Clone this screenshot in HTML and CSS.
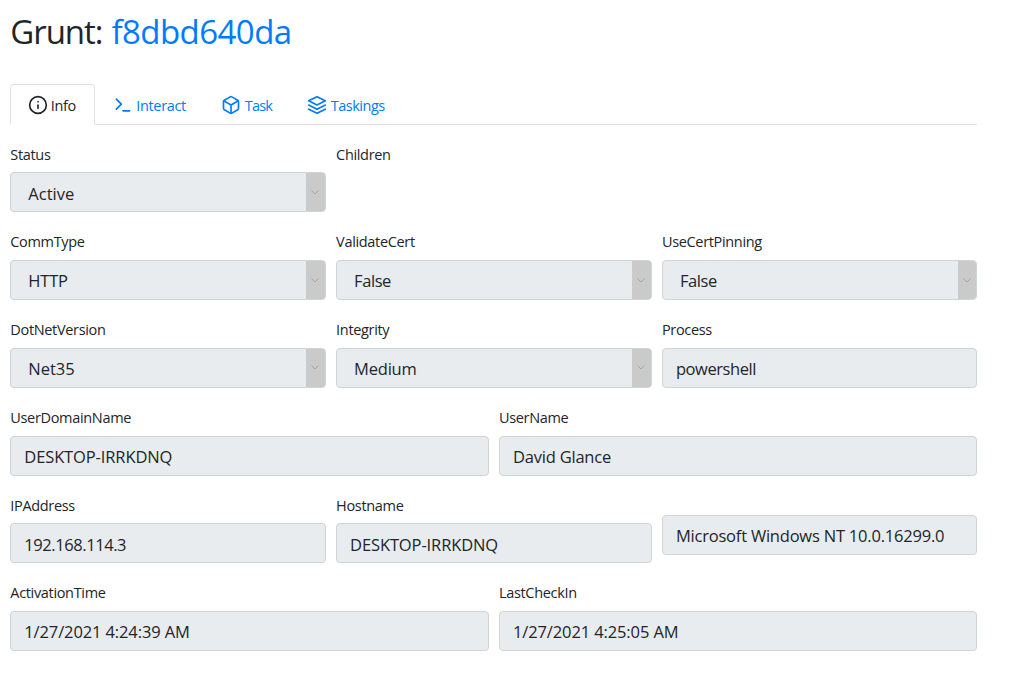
FILE: index.html
```
<!DOCTYPE html>
<html lang="en">
<head>
<meta charset="utf-8">
<title>Grunt: f8dbd640da</title>
<link rel="stylesheet" href="styles.css">
</head>
<body>
<main class="page">
  <h1 class="title"><span class="title-label">Grunt:</span><a class="title-link">f8dbd640da</a></h1>
  <nav class="tabs">
    <a class="tab active"><svg class="icon" viewBox="0 0 24 24"><circle cx="12" cy="12" r="10"/><path d="M12 16v-4M12 8h.01"/></svg><span>Info</span></a>
    <a class="tab tab-interact"><svg class="icon" viewBox="0 0 24 24"><path d="M4 17l6-6-6-6M12 19h8"/></svg><span>Interact</span></a>
    <a class="tab tab-task"><svg class="icon" viewBox="0 0 24 24"><path d="M21 16V8a2 2 0 0 0-1-1.73l-7-4a2 2 0 0 0-2 0l-7 4A2 2 0 0 0 3 8v8a2 2 0 0 0 1 1.73l7 4a2 2 0 0 0 2 0l7-4A2 2 0 0 0 21 16z"/><path d="M3.27 6.96L12 12.01l8.73-5.05M12 22.08V12"/></svg><span>Task</span></a>
    <a class="tab tab-taskings"><svg class="icon" viewBox="0 0 24 24"><path d="M12 2L2 7l10 5 10-5-10-5zM2 17l10 5 10-5M2 12l10 5 10-5"/></svg><span>Taskings</span></a>
  </nav>
  <form class="form">
    <div class="row three">
      <div class="group"><label class="label">Status</label><div class="field select"><span class="value wide">Active</span><span class="arrow"><svg class="chevron" viewBox="0 0 8 5"><path d="M.5.5L4 4 7.5.5"/></svg></span></div></div>
      <div class="group"><label class="label">Children</label></div>
    </div>
    <div class="row three">
      <div class="group"><label class="label">CommType</label><div class="field select"><span class="value">HTTP</span><span class="arrow"><svg class="chevron" viewBox="0 0 8 5"><path d="M.5.5L4 4 7.5.5"/></svg></span></div></div>
      <div class="group"><label class="label">ValidateCert</label><div class="field select"><span class="value tight">False</span><span class="arrow"><svg class="chevron" viewBox="0 0 8 5"><path d="M.5.5L4 4 7.5.5"/></svg></span></div></div>
      <div class="group"><label class="label">UseCertPinning</label><div class="field select"><span class="value tight">False</span><span class="arrow"><svg class="chevron" viewBox="0 0 8 5"><path d="M.5.5L4 4 7.5.5"/></svg></span></div></div>
    </div>
    <div class="row three">
      <div class="group"><label class="label">DotNetVersion</label><div class="field select"><span class="value wide">Net35</span><span class="arrow"><svg class="chevron" viewBox="0 0 8 5"><path d="M.5.5L4 4 7.5.5"/></svg></span></div></div>
      <div class="group"><label class="label">Integrity</label><div class="field select"><span class="value">Medium</span><span class="arrow"><svg class="chevron" viewBox="0 0 8 5"><path d="M.5.5L4 4 7.5.5"/></svg></span></div></div>
      <div class="group"><label class="label">Process</label><div class="field"><span class="value tight">powershell</span></div></div>
    </div>
    <div class="row two">
      <div class="group"><label class="label">UserDomainName</label><div class="field"><span class="value caps">DESKTOP-IRRKDNQ</span></div></div>
      <div class="group"><label class="label">UserName</label><div class="field"><span class="value">David Glance</span></div></div>
    </div>
    <div class="row three">
      <div class="group"><label class="label">IPAddress</label><div class="field"><span class="value tight">192.168.114.3</span></div></div>
      <div class="group"><label class="label">Hostname</label><div class="field"><span class="value caps">DESKTOP-IRRKDNQ</span></div></div>
      <div class="group unlabeled"><div class="field"><span class="value">Microsoft Windows NT 10.0.16299.0</span></div></div>
    </div>
    <div class="row two">
      <div class="group"><label class="label">ActivationTime</label><div class="field"><span class="value caps">1/27/2021 4:24:39 AM</span></div></div>
      <div class="group"><label class="label">LastCheckIn</label><div class="field"><span class="value caps">1/27/2021 4:25:05 AM</span></div></div>
    </div>
  </form>
</main>
</body>
</html>
```
FILE: styles.css
```
* { box-sizing: border-box; }
body { margin: 0; font-family: "Open Sans", sans-serif; color: #212529; background: #fff; overflow: hidden; }
.page { width: 977.3px; padding: 12px 0 0 10.3px; }

.title { display: flex; gap: 9px; margin: 0 0 32px; font-size: 33px; line-height: 40px; font-weight: 400; }
.title-label { letter-spacing: -1.05px; }
.title-link { color: #007bff; letter-spacing: -0.55px; }

.tabs { display: flex; height: 41px; border-bottom: 1px solid #dee2e6; font-size: 14.5px; letter-spacing: -0.35px; }
.tab { display: flex; align-items: center; gap: 3.5px; height: 41px; padding: 1px 0 0 18px; width: 85px; color: #007bff; white-space: nowrap; }
.tab.active { padding: 2px 0 1px 16.5px; border: 1px solid #dee2e6; border-bottom-color: #fff; border-radius: 4px 4px 0 0; color: #212529; gap: 3px; }
.tab-interact { width: 108px; padding-left: 17.5px; }
.tab-task { width: 86px; letter-spacing: -0.8px; }
.tab-taskings { width: 115px; letter-spacing: -0.5px; }
.icon { flex: none; width: 20px; height: 20px; fill: none; stroke: currentColor; stroke-width: 2; stroke-linecap: round; stroke-linejoin: round; }

.form { margin: 18.6px 0 0; }
.row { display: grid; column-gap: 10.4px; height: 87.75px; }
.three { grid-template-columns: repeat(3, 1fr); }
.two { grid-template-columns: repeat(2, 1fr); }
.label { display: block; height: 28.9px; font-size: 14.5px; line-height: 21px; letter-spacing: -0.33px; }
.field { display: flex; align-items: center; height: 40px; padding-left: 13px; overflow: hidden; background: #e9ecef; border: 1px solid #ced4da; border-radius: 4px; }
.select { justify-content: space-between; padding-left: 17px; }
.value { padding-top: 2.5px; font-size: 16.5px; line-height: 24px; letter-spacing: -0.21px; white-space: nowrap; }
.wide { letter-spacing: 0; }
.caps { letter-spacing: -0.12px; }
.tight { letter-spacing: -0.43px; }
.arrow { display: flex; align-items: center; justify-content: center; width: 18.5px; height: 40px; background: #cacaca; }
.chevron { width: 8px; height: 5px; fill: none; stroke: #a5a5a5; stroke-width: 1; }
.unlabeled { padding-top: 20.2px; }
```
